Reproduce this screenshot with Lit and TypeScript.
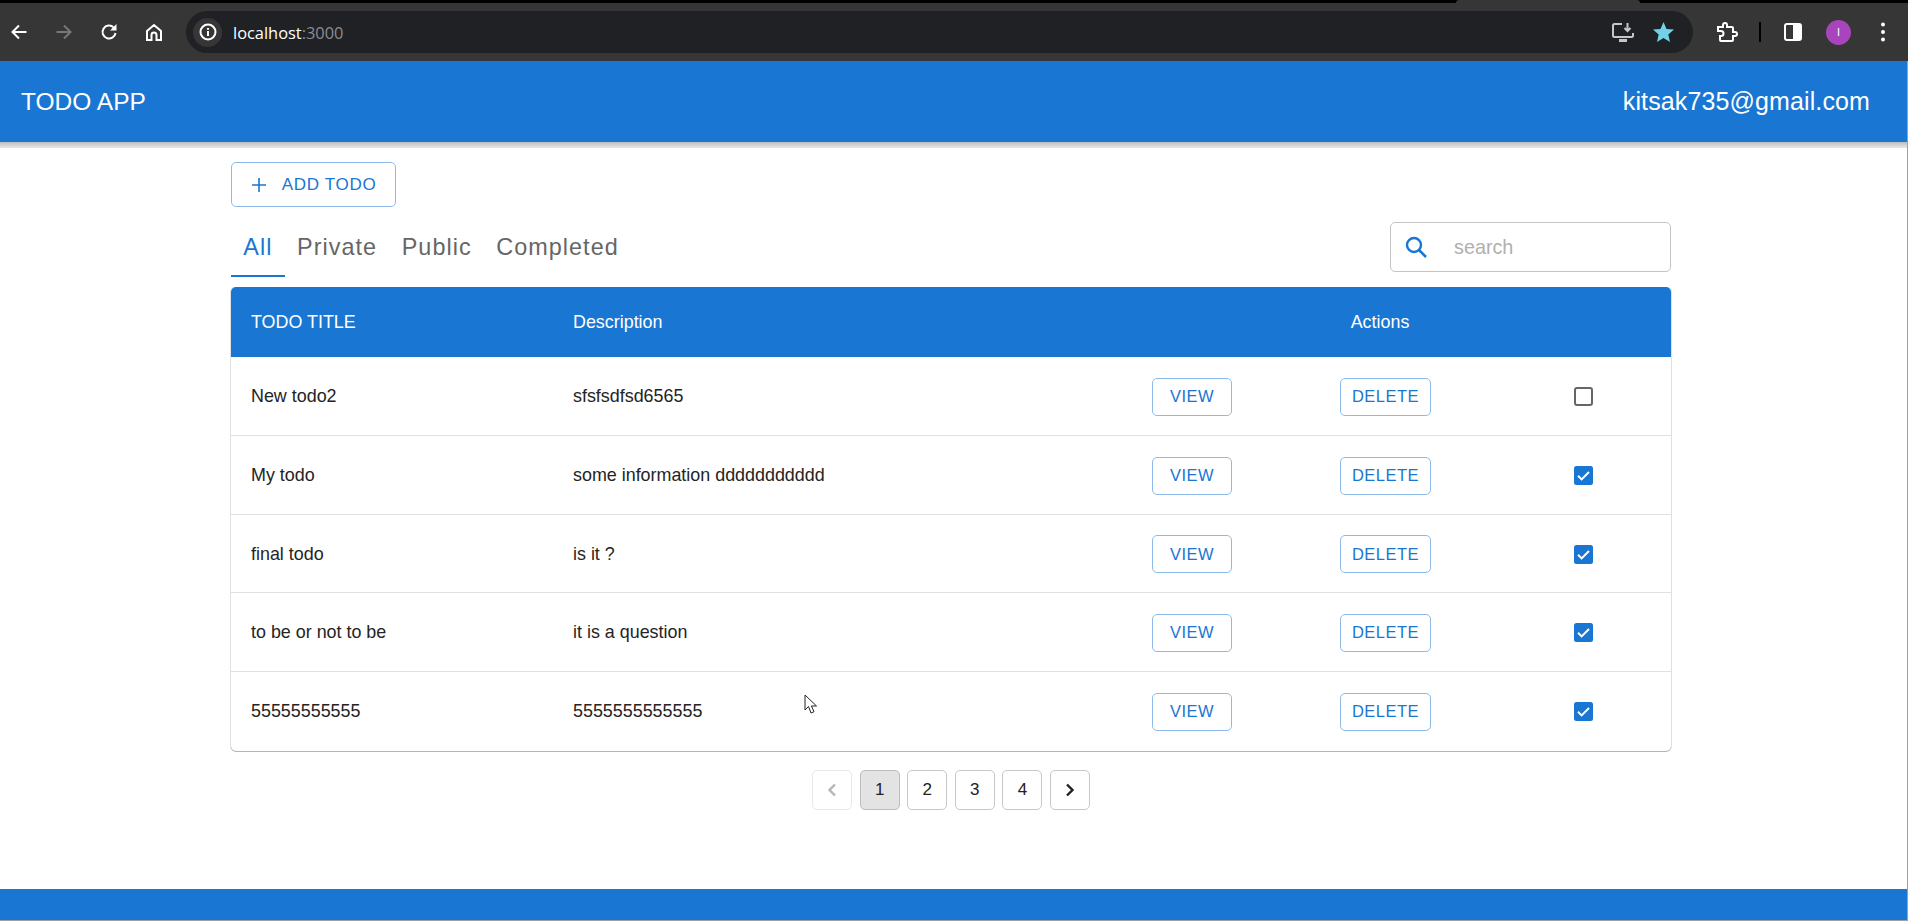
import { LitElement, html, css } from "lit";
import { customElement } from "lit/decorators.js";

const rows: [string, string, boolean][] = [
  ["New todo2", "sfsfsdfsd6565", false],
  ["My todo", "some information ddddddddddd", true],
  ["final todo", "is it ?", true],
  ["to be or not to be", "it is a question", true],
  ["55555555555", "5555555555555", true],
];

@customElement("app-root")
export class AppRoot extends LitElement {
  static styles = css`
    :host { display: block; width: 1908px; height: 921px; overflow: hidden; background: #fff; font-family: "Liberation Sans", Arial, sans-serif; color: #242424; }
    .page { display: flex; flex-direction: column; height: 921px; position: relative; }
    .strip { height: 3px; background: #000; flex: none; display: flex; }
    .strip-tab { margin-left: 1456px; width: 184px; height: 3px; background: #363636; border-radius: 3px 3px 0 0; }
    .chrome { height: 58px; flex: none; background: #363636; display: flex; align-items: center; color: #fff; box-sizing: border-box; }
    .nav { width: 45px; display: flex; justify-content: center; flex: none; }
    .nav svg, .tools svg { display: block; flex: none; }
    .nav.first { width: 38px; margin-right: 3px; }
    .omni { margin-left: 10px; width: 1507px; height: 42px; border-radius: 21px; background: #202124; display: flex; align-items: center; flex: none; box-sizing: border-box; padding-left: 7px; }
    .info { width: 29px; height: 29px; border-radius: 50%; background: #363636; display: flex; align-items: center; justify-content: center; flex: none; }
    .url { margin-left: 11px; font: 16.4px "Open Sans", sans-serif; color: #fff; }
    .url span { color: #8a8d91; }
    .omni-end { margin-left: auto; display: flex; gap: 19px; align-items: center; padding-right: 19px; }
    .tools { display: flex; align-items: center; margin-left: 23px; flex: none; }
    .ext { margin-right: 21px; }
    .panel { margin: 0 24px 0 23px; }
    .dots { margin-left: 29px; }
    .avatar { width: 25px; height: 25px; border-radius: 50%; background: #a845bd; font: 11px "Liberation Sans", sans-serif; display: flex; align-items: center; justify-content: center; color: #fff; flex: none; }
    .sep { width: 2px; height: 20px; background: #000; flex: none; }
    .content { flex: 1; min-height: 0; display: flex; flex-direction: column; box-sizing: border-box; border-right: 1px solid #a0a0a0; border-bottom: 1px solid #a0a0a0; }
    .bar { height: 81px; flex: none; background: #1976d2; color: #fff; display: flex; align-items: center; justify-content: space-between; padding: 0 37px 0 21px; position: relative; }
    .bar::after { content: ""; position: absolute; left: 0; right: 0; top: 100%; height: 6px; background: linear-gradient(#bdbdbd, #e8e8e8); }
    .brand { font-size: 24.5px; }
    .email { font-size: 25px; letter-spacing: .12px; }
    .main { flex: 1; padding: 20px 236px 0 231px; display: flex; flex-direction: column; min-height: 0; }
    .btn { box-sizing: border-box; border: 1px solid #8dbbe9; border-radius: 5px; background: #fff; color: #1976d2; font: 16.5px "Liberation Sans", sans-serif; letter-spacing: .5px; display: inline-flex; align-items: center; justify-content: center; padding: 0; }
    .add { width: 165px; height: 45px; gap: 15px; font-size: 17px; letter-spacing: .7px; }
    .tabs-row { display: flex; justify-content: space-between; margin-top: 15px; height: 55px; }
    .tabs { display: flex; }
    .tab { padding: 0 12.3px 4px; height: 55px; box-sizing: border-box; display: flex; align-items: center; font-size: 23.4px; letter-spacing: 1.04px; color: #666; }
    .tab.on { color: #1976d2; border-bottom: 2px solid #1976d2; padding-bottom: 2px; }
    .search { width: 281px; height: 50px; box-sizing: border-box; border: 1px solid #c4c4c4; border-radius: 5px; display: flex; align-items: center; padding-left: 13px; gap: 26px; color: #b0b0b0; font-size: 19.8px; }
    .table { margin-top: 10px; border-radius: 5px; box-shadow: 0 1px 0 #b4b4b4, 1px 0 0 #e0e0e0, -1px 0 0 #e0e0e0; overflow: hidden; }
    .row { display: grid; grid-template-columns: 322px 579px 188px 234px 1fr; align-items: center; padding-left: 20px; box-sizing: border-box; font-size: 17.9px; height: 78.5px; border-bottom: 1px solid #e0e0e0; }
    .row.first { height: 79.4px; }
    .row:last-child { border-bottom: 0; height: 79px; }
    .head { background: #1976d2; color: #fff; height: 70px; border-bottom: 0; }
    .actions { grid-column: 3 / 6; text-align: center; padding-right: 63px; }
    .cell { padding-top: 1px; display: flex; }
    .view { width: 80px; height: 38px; }
    .del { width: 91px; height: 38px; }
    .check { width: 19px; height: 19px; display: block; margin-top: 1px; }
    .pager { display: flex; justify-content: center; gap: 7.6px; margin-top: 19px; }
    .pg { width: 40px; height: 40px; box-sizing: border-box; border: 1px solid #c8c8c8; border-radius: 5px; display: flex; align-items: center; justify-content: center; font-size: 17px; color: #212121; }
    .pg.cur { background: #e3e3e3; border-color: #bcbcbc; }
    .pg.off { border-color: #e8e8e8; }
    .foot { height: 31px; flex: none; background: #1976d2; }
    .cursor { position: absolute; left: 804px; top: 694px; }
  `;

  checkbox(on: boolean) {
    return on
      ? html`<svg class="check" viewBox="0 0 19 19"><rect width="19" height="19" rx="2.5" fill="#1976d2"/><path d="M4 9.8l3.6 3.6L15 6" fill="none" stroke="#fff" stroke-width="2"/></svg>`
      : html`<svg class="check" viewBox="0 0 19 19"><rect x="1" y="1" width="17" height="17" rx="2" fill="none" stroke="#666" stroke-width="2"/></svg>`;
  }

  render() {
    return html`<div class="page">
      <div class="strip"><div class="strip-tab"></div></div>
      <div class="chrome">
        <div class="nav first"><svg width="18" height="18" viewBox="0 0 18 18"><path d="M16.500 9H3M9 2.500L2.500 9 9 15.500" fill="none" stroke="#fff" stroke-width="2"/></svg></div>
        <div class="nav"><svg width="18" height="18" viewBox="0 0 18 18"><path d="M1.500 9H15M9 2.500L15.500 9 9 15.500" fill="none" stroke="#777" stroke-width="2"/></svg></div>
        <div class="nav"><svg width="18" height="18" viewBox="0 0 18 18"><path d="M15.500 10a6.500 6.500 0 1 1-1.900-5.600L15.500 6.300" fill="none" stroke="#fff" stroke-width="2"/><path d="M16.500 1V7.500H10z" fill="#fff"/></svg></div>
        <div class="nav"><svg width="18" height="18" viewBox="0 0 18 18"><path d="M2 8l7-6 7 6v9h-4.500v-5a2.500 2.500 0 0 0-5 0v5H2z" fill="none" stroke="#fff" stroke-width="2"/></svg></div>
        <div class="omni">
          <div class="info"><svg width="18" height="18" viewBox="0 0 18 18"><circle cx="9" cy="9" r="7.500" fill="none" stroke="#fff" stroke-width="2"/><path d="M9 8v5M9 5v1.800" stroke="#fff" stroke-width="2"/></svg></div>
          <div class="url">localhost<span>:3000</span></div>
          <div class="omni-end">
            <svg width="22" height="20" viewBox="0 0 22 20"><path d="M10 2H2.500A1.500 1.500 0 0 0 1 3.500v10A1.500 1.500 0 0 0 2.500 15h17a1.500 1.500 0 0 0 1.500-1.500V11" fill="none" stroke="#c4c7c5" stroke-width="2"/><path d="M7 18.500h8" stroke="#c4c7c5" stroke-width="3"/><path d="M15.500 1v7M12.500 6l3 3 3-3" fill="none" stroke="#c4c7c5" stroke-width="2"/></svg>
            <svg width="21" height="20" viewBox="0 0 21 20"><path d="M10.500 0l3 6.900 7.500.7-5.700 5 1.700 7.400-6.500-3.900-6.500 3.900 1.700-7.400L0 7.600l7.500-.7z" fill="#6fd3e8"/></svg>
          </div>
        </div>
        <div class="tools">
          <svg class="ext" width="22" height="22" viewBox="0 0 22 22"><path d="M2 6h5V4a2 2 0 0 1 4 0v2h5a1 1 0 0 1 1 1v4h2a2 2 0 0 1 0 4h-2v4a1 1 0 0 1-1 1H5a1 1 0 0 1-1-1v-4h1a2.500 2.500 0 0 0 0-5H2z" fill="none" stroke="#fff" stroke-width="2"/></svg>
          <div class="sep"></div>
          <svg class="panel" width="18" height="18" viewBox="0 0 18 18"><rect x="1" y="1" width="16" height="16" rx="2" fill="none" stroke="#fff" stroke-width="2"/><rect x="9" y="1" width="8" height="16" fill="#fff"/></svg>
          <div class="avatar">I</div>
          <svg class="dots" width="6" height="20" viewBox="0 0 6 20"><circle cx="3" cy="2.500" r="2" fill="#fff"/><circle cx="3" cy="10" r="2" fill="#fff"/><circle cx="3" cy="17.500" r="2" fill="#fff"/></svg>
        </div>
      </div>
      <div class="content">
        <div class="bar"><span class="brand">TODO APP</span><span class="email">kitsak735@gmail.com</span></div>
        <div class="main">
          <div><button class="btn add"><svg width="16" height="16" viewBox="0 0 16 16"><path d="M8 1v14M1 8h14" stroke="#1976d2" stroke-width="1.600"/></svg>ADD TODO</button></div>
          <div class="tabs-row">
            <div class="tabs">
              <div class="tab on">All</div><div class="tab">Private</div><div class="tab">Public</div><div class="tab">Completed</div>
            </div>
            <div class="search"><svg width="24" height="24" viewBox="0 0 24 24"><circle cx="10" cy="10" r="7" fill="none" stroke="#1976d2" stroke-width="2.400"/><path d="M15 15l7 7" stroke="#1976d2" stroke-width="2.600"/></svg><span>search</span></div>
          </div>
          <div class="table">
            <div class="row head"><span>TODO TITLE</span><span>Description</span><span class="actions">Actions</span></div>
            ${rows.map((r, i) => html`<div class="row ${i === 0 ? "first" : ""}"><span class="cell">${r[0]}</span><span class="cell">${r[1]}</span><span class="cell"><button class="btn view">VIEW</button></span><span class="cell"><button class="btn del">DELETE</button></span>${this.checkbox(r[2])}</div>`)}
          </div>
          <div class="pager">
            <div class="pg off"><svg width="12" height="14" viewBox="0 0 12 14"><path d="M9 1.500L3.500 7 9 12.500" fill="none" stroke="#b5b5b5" stroke-width="2.400"/></svg></div>
            <div class="pg cur">1</div><div class="pg">2</div><div class="pg">3</div><div class="pg">4</div>
            <div class="pg"><svg width="12" height="14" viewBox="0 0 12 14"><path d="M3 1.500L8.500 7 3 12.500" fill="none" stroke="#212121" stroke-width="2.400"/></svg></div>
          </div>
        </div>
        <div class="foot"></div>
      </div>
      <svg class="cursor" width="14" height="21" viewBox="0 0 14 21"><path d="M1 1v15l3.500-3.500L7 19l3-1.300-2.600-5.700H12.500z" fill="#fff" stroke="#222" stroke-width="1"/></svg>
    </div>`;
  }
}
